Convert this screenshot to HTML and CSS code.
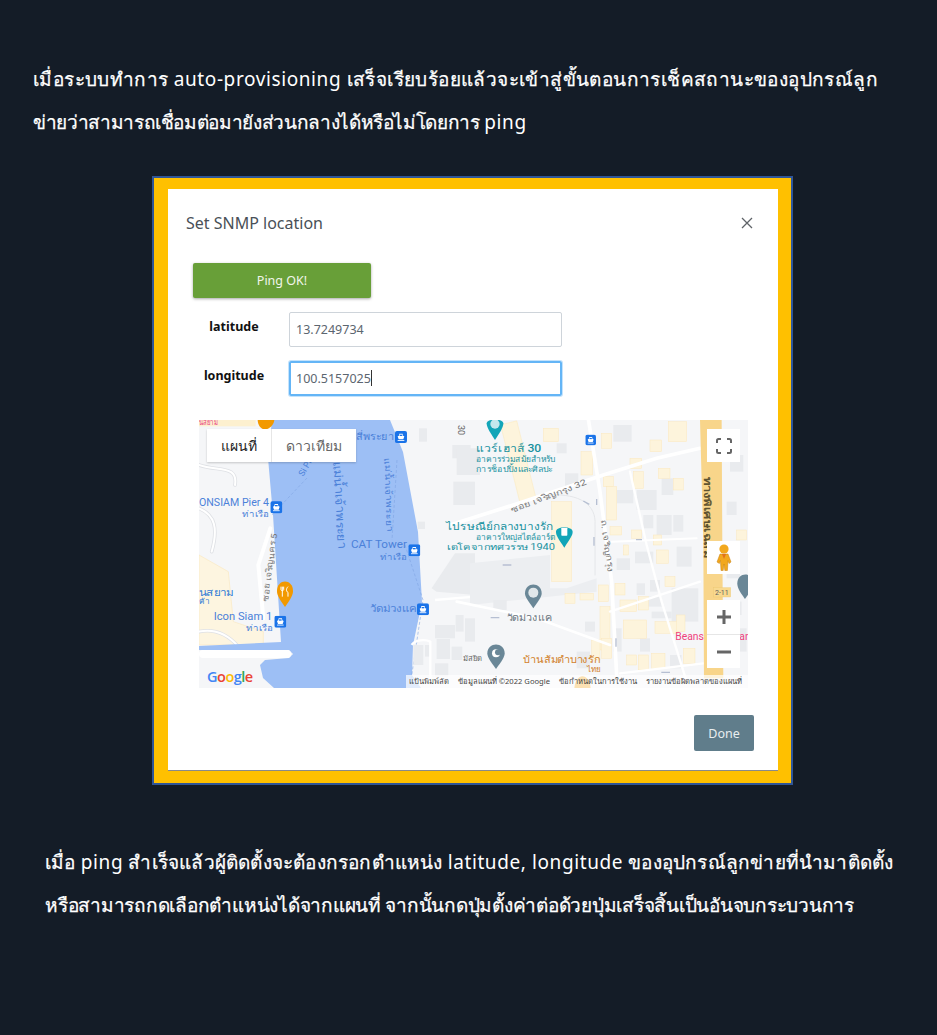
FILE: index.html
```html
<!DOCTYPE html>
<html lang="th">
<head>
    <meta charset="UTF-8">
    <meta name="viewport" content="width=device-width, initial-scale=1.0">
    <title>Set SNMP location</title>
    <link rel="stylesheet" href="styles.css">
</head>
<body>
    <p class="note note-top">
        <span class="line line-a">เมื่อระบบทำการ <span class="latin">auto-provisioning</span> เสร็จเรียบร้อยแล้วจะเข้าสู่ขั้นตอนการเช็คสถานะของอุปกรณ์ลูก</span>
        <span class="line line-b">ข่ายว่าสามารถเชื่อมต่อมายังส่วนกลางได้หรือไม่โดยการ <span class="latin">ping</span></span>
    </p>

    <div class="shot">
        <div class="modal">
            <div class="modal-head">
                <h2>Set SNMP location</h2>
                <svg class="close" width="12" height="12" viewBox="0 0 12 12"><path d="M1 1l10 10M11 1L1 11" stroke="#5f6368" stroke-width="1.3" fill="none"/></svg>
            </div>
            <button class="ping">Ping OK!</button>
            <div class="field">
                <label>latitude</label>
                <div class="input">13.7249734</div>
            </div>
            <div class="field">
                <label>longitude</label>
                <div class="input input-focus">100.5157025<span class="caret"></span></div>
            </div>

            <div class="map">
                <svg class="map-art" width="549" height="268" viewBox="0 0 549 268">
                    <defs>
                        <symbol id="pier" viewBox="0 0 36 36">
                            <rect width="36" height="36" rx="6" fill="#1a73e8"/>
                            <path d="M13 8h10l1 6 4 2-3 9H11l-3-9 4-2Z" fill="#fff"/>
                            <rect x="14" y="11" width="8" height="4" fill="#1a73e8"/>
                            <rect x="8" y="27" width="20" height="2.500" fill="#fff"/>
                        </symbol>
                    </defs>
                    <rect width="549" height="268" fill="#f5f6f8"/>

                    <!-- left bank -->
                    <g transform="translate(-4,-5) scale(.3333)">
                        <path d="M12 420L100 470 115 620 205 650 205 690 12 690Z" fill="#fdf5e0" stroke="#fbe9c0" stroke-width="2"/>
                        <g fill="none" stroke-linecap="round">
                            <path d="M12 150C70 170 130 150 120 210 M12 280C60 300 70 340 50 410 M12 650C60 640 100 660 130 695" stroke="#dfe1e5" stroke-width="11"/>
                            <path d="M12 150C70 170 130 150 120 210 M12 280C60 300 70 340 50 410 M12 650C60 640 100 660 130 695" stroke="#fff" stroke-width="6"/>
                            <path d="M226 340L190 450 205 610" stroke="#fff" stroke-width="12"/>
                        </g>
                        <rect x="12" y="12" width="170" height="22" fill="#fdf0cf"/>
                    </g>

                    <!-- river -->
                    <path d="M73 0L69 38 74 95 82 222 0 226 0 230 90 230 94 234 90 238 66 240 61 245 64 258 75 268 222 268 213 255 214 225 223 182 219 112 204 32 191 0Z" fill="#9dbff5"/>
                    <rect y="230" width="92" height="8" rx="4" fill="#fff"/>
                    <path d="M108 58L73 95M198 40L193 120M206 125L224 180 212 260" fill="none" stroke="#7fa5e2" stroke-width=".6" stroke-dasharray="3 2"/>

                    <!-- right bank buildings -->
                    <g transform="translate(-4,-5) scale(.3333)" fill="#e9ebee">
                        <rect x="672" y="40" width="24" height="40"/><rect x="772" y="90" width="55" height="40"/><rect x="775" y="200" width="65" height="70"/>
                        <rect x="668" y="320" width="22" height="22"/><rect x="655" y="690" width="30" height="60"/><rect x="690" y="690" width="16" height="35"/>
                        <rect x="720" y="630" width="60" height="40"/><rect x="782" y="600" width="24" height="50"/><rect x="725" y="672" width="40" height="60"/>
                        <rect x="770" y="695" width="32" height="40"/><rect x="810" y="610" width="30" height="70"/><rect x="720" y="745" width="40" height="40"/>
                        <path d="M710 520L780 415 840 415 840 540 725 530Z"/>
                        <path d="M720 555L840 545M650 690C660 675 690 672 706 680L706 800" fill="none" stroke="#fff" stroke-width="7"/>
                    </g>
                    <g transform="translate(271,-5) scale(.3333)" fill="#e9ebee">
                        <path d="M0 445L240 420 240 520 290 520 380 490 380 530 0 570Z" fill="#eceef1"/>
                        <rect x="-40" y="100" width="70" height="80"/><rect x="260" y="85" width="30" height="30"/><rect x="285" y="175" width="40" height="40"/>
                        <rect x="440" y="225" width="50" height="40"/><rect x="500" y="225" width="60" height="60"/><rect x="575" y="190" width="35" height="50"/>
                        <rect x="430" y="30" width="55" height="50"/><rect x="345" y="620" width="30" height="30"/><rect x="70" y="555" width="40" height="30"/>
                        <rect x="440" y="430" width="40" height="35"/><rect x="495" y="410" width="55" height="35"/><rect x="620" y="395" width="45" height="60"/>
                        <rect x="520" y="300" width="30" height="40"/><rect x="560" y="300" width="45" height="60"/><rect x="610" y="300" width="30" height="50"/>
                        <rect x="500" y="505" width="25" height="35"/><rect x="540" y="495" width="30" height="35"/><rect x="535" y="545" width="40" height="30"/>
                        <rect x="605" y="520" width="80" height="100"/><rect x="545" y="590" width="60" height="20"/><rect x="500" y="640" width="30" height="30"/>
                        <rect x="510" y="670" width="30" height="40"/><rect x="430" y="640" width="25" height="70"/><rect x="770" y="260" width="30" height="40"/>
                        <rect x="770" y="420" width="40" height="70"/><rect x="600" y="720" width="35" height="40"/><rect x="320" y="710" width="40" height="50"/>
                        <rect x="780" y="120" width="40" height="50"/><rect x="785" y="560" width="30" height="40"/><rect x="790" y="640" width="40" height="70"/>

                        <g fill="#fdf4dc" stroke="#fbe8bd" stroke-width="1.500">
                            <rect x="220" y="40" width="45" height="40"/><rect x="395" y="55" width="30" height="45"/><rect x="595" y="20" width="55" height="60"/>
                            <rect x="540" y="75" width="35" height="35"/><rect x="333" y="110" width="35" height="70"/><rect x="480" y="130" width="35" height="30"/>
                            <rect x="565" y="160" width="35" height="30"/><rect x="610" y="190" width="30" height="35"/><rect x="490" y="170" width="30" height="50"/>
                            <rect x="400" y="185" width="30" height="30"/><rect x="410" y="215" width="30" height="100"/><rect x="245" y="260" width="60" height="240"/>
                            <rect x="420" y="335" width="35" height="25"/><rect x="485" y="345" width="30" height="25"/><rect x="550" y="360" width="25" height="30"/>
                            <rect x="560" y="405" width="35" height="40"/><rect x="460" y="390" width="15" height="30"/><rect x="585" y="485" width="30" height="30"/>
                            <rect x="385" y="510" width="30" height="50"/><rect x="435" y="505" width="30" height="35"/><rect x="285" y="535" width="30" height="30"/>
                            <rect x="330" y="535" width="40" height="20"/><rect x="450" y="555" width="50" height="35"/><rect x="505" y="545" width="30" height="40"/>
                            <rect x="390" y="575" width="30" height="130"/><rect x="460" y="615" width="70" height="55"/><rect x="555" y="620" width="70" height="35"/>
                            <rect x="620" y="600" width="25" height="50"/><rect x="365" y="675" width="25" height="60"/><rect x="395" y="670" width="30" height="60"/>
                            <rect x="470" y="720" width="30" height="30"/><rect x="505" y="720" width="30" height="45"/><rect x="545" y="715" width="40" height="45"/>
                            <rect x="640" y="700" width="35" height="45"/><rect x="800" y="345" width="30" height="30"/><rect x="120" y="20" width="50" height="240" transform="rotate(-14 145 140)"/>
                        </g>

                        <!-- streets -->
                        <g fill="none" stroke="#fff" stroke-linecap="round">
                            <path d="M-60 330L130 270 400 180 560 130 690 100" stroke-width="11"/>
                            <path d="M355 12L390 230 425 500 440 780" stroke-width="11"/>
                            <path d="M480 170L530 390 575 560 650 800" stroke-width="7"/>
                            <path d="M425 380L680 370" stroke-width="6"/>
                            <path d="M420 590L690 500" stroke-width="7"/>
                            <path d="M-40 560L200 610 420 690" stroke-width="8"/>
                            <path d="M450 775L700 745" stroke-width="7"/>
                            <path d="M240 240C330 235 380 270 375 330L375 480" stroke="#e4e6e9" stroke-width="3"/>
                        </g>

                        <!-- arrows -->
                        <path d="M340 258L358 268M380 270V252M372 392V366M498 374H516M98 450H124M62 608H88M438 695V670M574 772H600" fill="none" stroke="#b6bfd2" stroke-width="4"/>

                        <!-- highway -->
                        <path d="M690 12H755L757 380 760 790 702 790 700 380Z" fill="#f8d58a"/>
                    </g>

                    <!-- labels: right half -->
                    <g transform="translate(271,-5) scale(.3333)" font-family="Roboto, 'Noto Sans', sans-serif">
                        <path d="M75 75C55 45 50 35 50 25 50 10 100 10 100 25 100 35 95 45 75 75Z" fill="#12a5b8"/><circle cx="75" cy="27" r="14" fill="#fff" opacity=".75"/>
                        <text class="t-teal" x="18" y="111" font-size="31" font-weight="500" textLength="196" lengthAdjust="spacingAndGlyphs">แวร์เฮาส์ 30</text>
                        <text class="t-teal" x="18" y="141" font-size="25" textLength="237" lengthAdjust="spacingAndGlyphs">อาคารร่วมสมัยสำหรับ</text>
                        <text class="t-teal" x="18" y="170" font-size="25" textLength="230" lengthAdjust="spacingAndGlyphs">การช็อปปิ้งและศิลปะ</text>
                        <text class="t-teal" x="-72" y="345" font-size="31" font-weight="500" textLength="322" lengthAdjust="spacingAndGlyphs">ไปรษณีย์กลางบางรัก</text>
                        <text class="t-teal" x="18" y="374" font-size="25" textLength="237" lengthAdjust="spacingAndGlyphs">อาคารใหญ่สไตล์อาร์ต</text>
                        <text class="t-teal" x="-70" y="404" font-size="25" textLength="325" lengthAdjust="spacingAndGlyphs">เดโคจากทศวรรษ 1940</text>
                        <path d="M283 398C265 370 258 362 258 350 258 332 308 332 308 350 308 362 300 370 283 398Z" fill="#12a5b8"/><rect x="274" y="338" width="18" height="24" rx="2" fill="#fff"/>
                        <text class="t-road" transform="rotate(-21 125 295)" x="125" y="295" font-size="25" textLength="242" lengthAdjust="spacingAndGlyphs">ซอย เจริญกรุง 32</text>
                        <text class="t-road" transform="rotate(82 392 315)" x="392" y="315" font-size="25" textLength="157" lengthAdjust="spacingAndGlyphs">ถ. เจริญกรุง</text>
                        <path d="M190 580C168 550 165 542 165 535 165 500 215 500 215 535 215 542 212 550 190 580Z" fill="#6a8797"/><circle cx="190" cy="533" r="15" fill="#fff" opacity=".8"/>
                        <text class="t-grey" x="110" y="618" font-size="28" textLength="135" lengthAdjust="spacingAndGlyphs">วัดม่วงแค</text>
                        <path d="M78 762C58 735 52 725 52 715 52 680 104 680 104 715 104 725 98 735 78 762Z" fill="#6a8797"/><circle cx="78" cy="715" r="12" fill="#fff"/><circle cx="84" cy="712" r="9" fill="#6a8797"/>
                        <text class="t-orange" x="160" y="743" font-size="29" textLength="232" lengthAdjust="spacingAndGlyphs">บ้านส้มตำบางรัก</text>
                        <text class="t-orange" x="350" y="770" font-size="24" textLength="42" lengthAdjust="spacingAndGlyphs">ไทย</text>
                        <path d="M313 825C313 770 362 770 362 825Z" fill="#f29900"/>
                        <text transform="rotate(90 702 185)" x="702" y="185" font-size="27" fill="#5f5330" font-weight="700" textLength="245" lengthAdjust="spacingAndGlyphs">ทางพิเศษเฉลิม</text>
                        <rect x="730" y="518" width="52" height="28" fill="#f8d98f" stroke="#e9c46e"/><text x="735" y="539" font-size="21" fill="#5f5f5f">2-11</text>
                        <path d="M825 552C805 525 802 515 802 505 802 470 850 470 850 505 850 515 845 525 825 552Z" fill="#6a8797"/>
                        <text x="616" y="676" font-size="31" fill="#ef3f7c">Beans</text><text x="808" y="676" font-size="31" fill="#ef3f7c">an</text>
                        <use href="#pier" x="346" y="58" width="32" height="34"/>
                    </g>

                    <!-- labels: left half -->
                    <g transform="translate(-4,-5) scale(.3333)" font-family="Roboto, 'Noto Sans', sans-serif">
                        <path d="M210 12H238C238 30 225 40 210 45 195 40 188 30 188 12Z" fill="#f29900"/>
                        <text x="12" y="30" font-size="25" fill="#e8417f" textLength="56" lengthAdjust="spacingAndGlyphs">นสยาม</text>
                        <text class="t-blue" x="484" y="76" font-size="29" textLength="112" lengthAdjust="spacingAndGlyphs">สี่พระยา</text>
                        <use href="#pier" x="600" y="48" width="36" height="36"/>
                        <text x="790" y="30" font-size="27" fill="#666" transform="rotate(90 790 30)">30</text>
                        <text class="t-blue" x="12" y="272" font-size="30" textLength="210" lengthAdjust="spacingAndGlyphs">ONSIAM Pier 4</text>
                        <text class="t-blue" x="142" y="305" font-size="26" textLength="80" lengthAdjust="spacingAndGlyphs">ท่าเรือ</text>
                        <use href="#pier" x="226" y="258" width="36" height="38"/>
                        <text class="t-blue" transform="rotate(87 415 140)" x="415" y="140" font-size="36" textLength="262" lengthAdjust="spacingAndGlyphs">แม่น้ำเจ้าพระยา</text>
                        <text class="t-blue" transform="rotate(88 568 130)" x="568" y="130" font-size="26" textLength="220" lengthAdjust="spacingAndGlyphs">แม่น้ำเจ้าพระยา</text>
                        <text class="t-blue" transform="rotate(-60 325 185)" x="325" y="185" font-size="26">Si Ph</text>
                        <text class="t-blue" x="468" y="400" font-size="30" textLength="168" lengthAdjust="spacingAndGlyphs">CAT Tower</text>
                        <text class="t-blue" x="556" y="436" font-size="26" textLength="80" lengthAdjust="spacingAndGlyphs">ท่าเรือ</text>
                        <use href="#pier" x="640" y="388" width="36" height="36"/>
                        <text class="t-road" transform="rotate(-82 218 560)" x="218" y="560" font-size="25" textLength="205" lengthAdjust="spacingAndGlyphs">ซอย เจริญนคร 5</text>
                        <path d="M270 576C252 550 246 540 246 528 246 490 294 490 294 528 294 540 288 550 270 576Z" fill="#f29900"/><path d="M262 515V527M262 527V545M279 515C272 522 274 530 279 532V545M258 515V524C258 528 266 528 266 524V515" fill="none" stroke="#fff" stroke-width="3"/>
                        <text x="12" y="542" font-size="28" fill="#2f7ad6" textLength="105" lengthAdjust="spacingAndGlyphs">นสยาม</text>
                        <text x="12" y="568" font-size="22" fill="#2f7ad6" textLength="30" lengthAdjust="spacingAndGlyphs">ค้า</text>
                        <text class="t-blue" x="56" y="616" font-size="30" textLength="176" lengthAdjust="spacingAndGlyphs">Icon Siam 1</text>
                        <text class="t-blue" x="154" y="648" font-size="26" textLength="80" lengthAdjust="spacingAndGlyphs">ท่าเรือ</text>
                        <use href="#pier" x="238" y="602" width="36" height="36"/>
                        <text class="t-blue" x="524" y="592" font-size="29" textLength="140" lengthAdjust="spacingAndGlyphs">วัดม่วงแค</text>
                        <use href="#pier" x="666" y="565" width="36" height="36"/>
                        <text x="805" y="738" font-size="23" fill="#666">มัสยิด</text>
                    </g>
                </svg>

                <div class="map-type">
                    <span class="map-tab map-tab-on">แผนที่</span>
                    <span class="map-tab">ดาวเทียม</span>
                </div>
                <div class="map-btn map-full">
                    <svg width="16" height="16" viewBox="0 0 16 16"><path d="M1 5V2.500Q1 1 2.500 1H5M11 1h2.500Q15 1 15 2.500V5M15 11v2.500Q15 15 13.500 15H11M5 15H2.500Q1 15 1 13.500V11" fill="none" stroke="#666" stroke-width="2"/></svg>
                </div>
                <div class="map-btn map-peg">
                    <svg width="16" height="27" viewBox="0 0 16 27">
                        <circle cx="8" cy="5" r="4.600" fill="#f2a81d"/>
                        <path d="M4 10h8l3 8-2 1.500-1-3-.6 10H8.800L8 20l-.8 6.500H5l-.6-10-1 3L1 18Z" fill="#f2a81d" stroke="#c77f10" stroke-width=".5"/>
                        <path d="M6 10l2 5 2-5" fill="#e2711d"/>
                    </svg>
                </div>
                <div class="map-zoom">
                    <span class="zoom-btn"><svg width="16" height="16" viewBox="0 0 16 16"><path d="M8 1v14M1 8h14" stroke="#666" stroke-width="3"/></svg></span>
                    <span class="zoom-btn"><svg width="16" height="16" viewBox="0 0 16 16"><path d="M1 8h14" stroke="#666" stroke-width="3"/></svg></span>
                </div>
                <div class="google"><span class="g-b">G</span><span class="g-r">o</span><span class="g-y">o</span><span class="g-b">g</span><span class="g-g">l</span><span class="g-r">e</span></div>
                <div class="map-foot">
                    <span>แป้นพิมพ์ลัด</span>
                    <span>ข้อมูลแผนที่ ©2022 Google</span>
                    <span>ข้อกำหนดในการใช้งาน</span>
                    <span>รายงานข้อผิดพลาดของแผนที่</span>
                </div>
            </div>

            <div class="modal-foot">
                <button class="done">Done</button>
            </div>
        </div>
    </div>

    <p class="note note-bottom">
        <span class="line line-c">เมื่อ <span class="latin">ping</span> สำเร็จแล้วผู้ติดตั้งจะต้องกรอกตำแหน่ง <span class="latin">latitude, longitude</span> ของอุปกรณ์ลูกข่ายที่นำมาติดตั้ง</span>
        <span class="line line-d">หรือสามารถกดเลือกตำแหน่งได้จากแผนที่ จากนั้นกดปุ่มตั้งค่าต่อด้วยปุ่มเสร็จสิ้นเป็นอันจบกระบวนการ</span>
    </p>
</body>
</html>
```

FILE: styles.css
```css
/* Global */
* {
    box-sizing: border-box;
    margin: 0;
    padding: 0;
}

body {
    width: 937px;
    height: 1035px;
    overflow: hidden;
    background-color: #141c27;
    font-family: "Noto Sans", "Open Sans", sans-serif;
}

/* Text blocks */
.note {
    color: #fff;
    font-size: 19px;
    font-weight: 500;
    line-height: 43px;
    white-space: nowrap;
    -webkit-text-stroke: 0.25px #fff;
}

.note-top {
    padding: 58px 0 0 33px;
}

.note-bottom {
    padding: 56px 0 0 45px;
}

.line {
    display: block;
}

.line-a { letter-spacing: 0.4px; }
.line-b { letter-spacing: -0.35px; }
.line-c { letter-spacing: 0.2px; }
.line-d { letter-spacing: -0.25px; }

.latin {
    font-weight: 400;
    letter-spacing: 0.6px;
    -webkit-text-stroke: 0;
}

/* Screenshot frame */
.shot {
    width: 641px;
    height: 609px;
    margin: 32px 0 0 152px;
    border: 2px solid #2f5597;
    background-color: #ffc000;
    padding: 11px 13px 12px 14px;
}

.modal {
    height: 100%;
    background-color: #fff;
    border-bottom: 1px solid #8a8a8a;
    padding: 0 24px 0 18px;
}

.modal-head {
    display: flex;
    justify-content: space-between;
    align-items: center;
    height: 68px;
    margin-bottom: 6px;
}

.modal-head h2 {
    font-size: 16px;
    font-weight: 400;
    color: #495057;
}

.close {
    margin-right: 1px;
}

/* Form */
.ping {
    display: block;
    width: 178px;
    height: 35px;
    margin-left: 7px;
    border: none;
    border-radius: 2px;
    background-color: #689f38;
    color: #f1f6ec;
    font-family: inherit;
    font-size: 12.500px;
    box-shadow: 0 1px 3px rgba(0, 0, 0, 0.35);
}

.field {
    display: flex;
    align-items: center;
    margin-top: 14px;
}

.field label {
    width: 103px;
    padding: 0 7px 6px 0;
    text-align: center;
    font-size: 12.500px;
    font-weight: 700;
    color: #111;
}

.input {
    width: 273px;
    height: 35px;
    border: 1px solid #ced4da;
    border-radius: 2px;
    padding-left: 6px;
    font-size: 12.500px;
    line-height: 33px;
    color: #5c6670;
}

.input-focus {
    border: 2px solid #64b5f6;
    padding-left: 5px;
    line-height: 31px;
    box-shadow: 0 0 0 1px #c4e3fc;
}

.caret {
    display: inline-block;
    width: 1px;
    height: 16px;
    background-color: #333;
    vertical-align: -3px;
}

/* Map */
.map {
    position: relative;
    width: 549px;
    height: 268px;
    margin: 24px 0 0 13px;
    overflow: hidden;
}

.map-art {
    display: block;
}

.t-blue { fill: #4b81d9; }
.t-teal { fill: #17919f; }
.t-road { fill: #777; }
.t-grey { fill: #6b7680; }
.t-orange { fill: #d2812b; }

.map-type {
    position: absolute;
    top: 9px;
    left: 8px;
    display: flex;
    height: 33px;
    background-color: #fff;
    box-shadow: 0 1px 2px rgba(0, 0, 0, 0.2);
    font-size: 14px;
    line-height: 33px;
    color: #666;
}

.map-tab {
    padding: 0 14px;
}

.map-tab-on {
    color: #222;
    border-right: 1px solid #e6e6e6;
}

.map-btn {
    position: absolute;
    left: 508px;
    display: flex;
    justify-content: center;
    align-items: center;
    width: 33px;
    height: 33px;
    background-color: #fff;
}

.map-full {
    top: 9px;
}

.map-peg {
    top: 121px;
}

.map-zoom {
    position: absolute;
    top: 180px;
    left: 508px;
    width: 33px;
    background-color: #fff;
}

.zoom-btn {
    display: flex;
    justify-content: center;
    align-items: center;
    height: 34px;
}

.zoom-btn + .zoom-btn {
    border-top: 1px solid #e6e6e6;
}

.google {
    position: absolute;
    left: 8px;
    bottom: 2px;
    font-family: "Open Sans", sans-serif;
    font-size: 14.500px;
    font-weight: 600;
    letter-spacing: -0.5px;
}

.g-b { color: #4285f4; }
.g-r { color: #ea4335; }
.g-y { color: #fbbc05; }
.g-g { color: #34a853; }

.map-foot {
    position: absolute;
    right: 0;
    bottom: 0;
    display: flex;
    gap: 9px;
    height: 13px;
    padding: 0 6px 0 3px;
    background-color: rgba(255, 255, 255, 0.7);
    font-size: 7.600px;
    line-height: 13px;
    color: #444;
    white-space: nowrap;
}

/* Footer button */
.modal-foot {
    display: flex;
    justify-content: flex-end;
    margin-top: 27px;
}

.done {
    width: 60px;
    height: 36px;
    border: none;
    border-radius: 2px;
    background-color: #607d8b;
    color: #e9eef0;
    font-family: inherit;
    font-size: 12.500px;
}
```
